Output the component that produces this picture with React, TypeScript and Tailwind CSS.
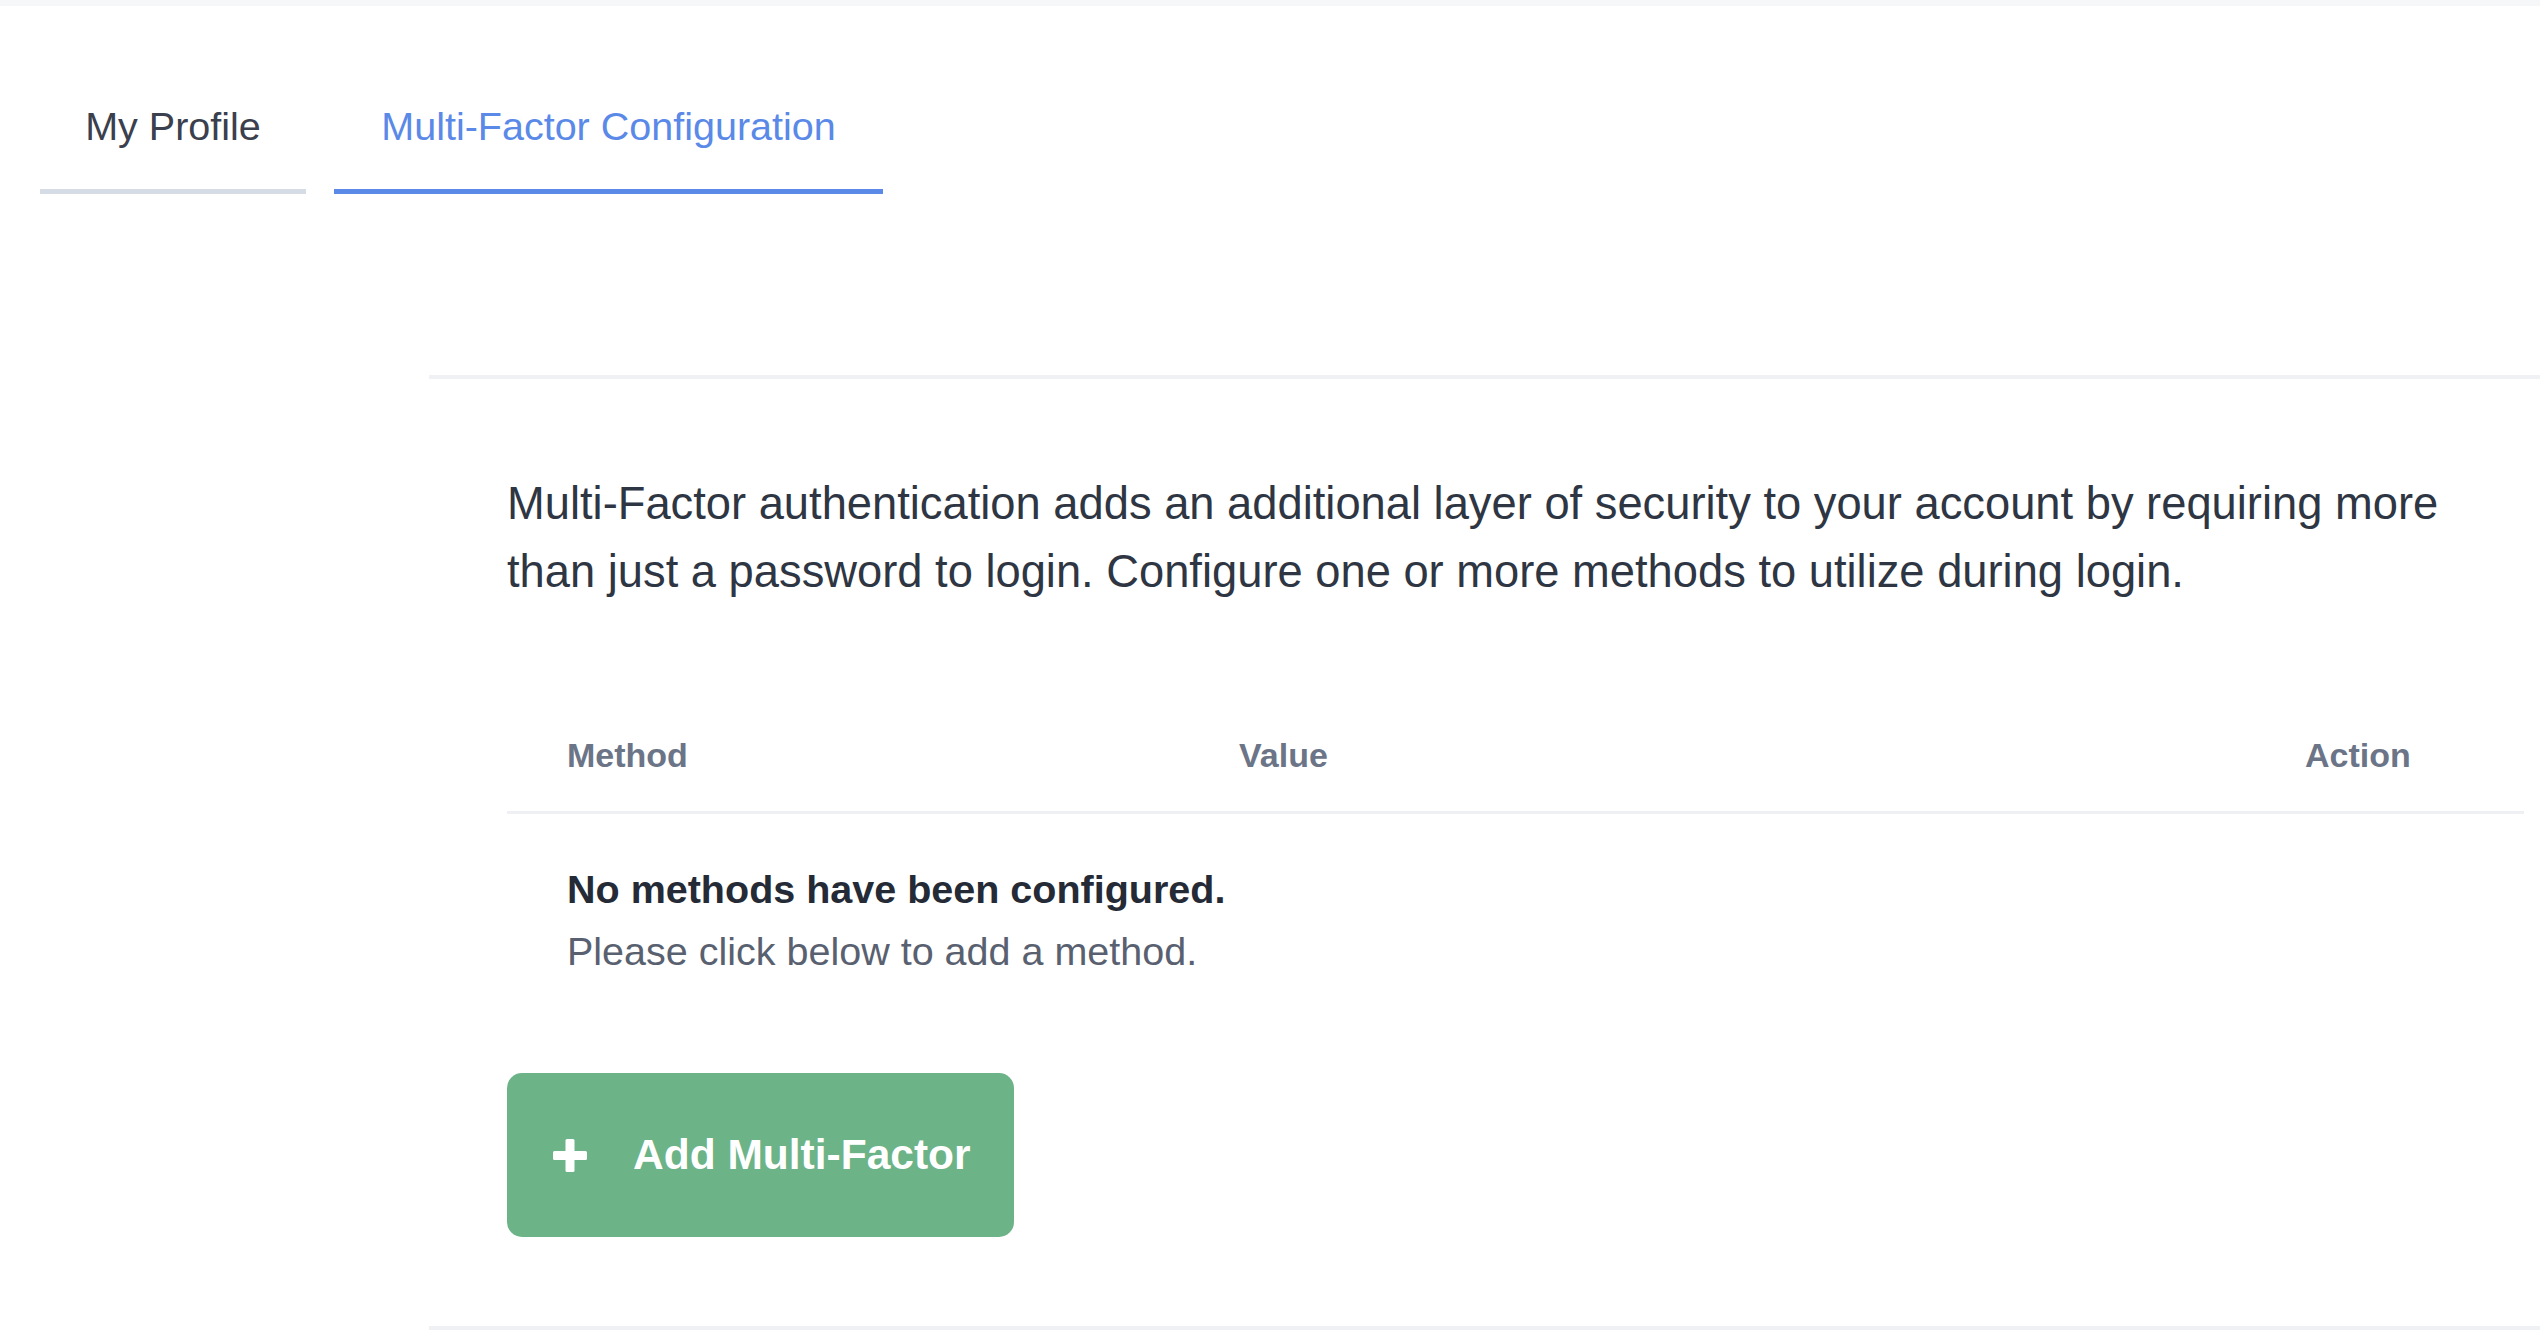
import React from "react";

export default function App() {
  const font = { fontFamily: '"Liberation Sans", Arial, Helvetica, sans-serif' };
  return (
    <div className="min-h-[1340px] w-[2540px] bg-white overflow-hidden" style={font}>
      <div className="h-[6px] bg-[#f6f7f9]" />
      {/* Tabs */}
      <div className="flex gap-[28px] pl-[40px] pt-[96px]">
        <div className="w-[266px] flex justify-center pb-[39px] border-b-[5px] border-[#d6dce5]">
          <span className="text-[39.5px] leading-[48px] text-[#3a404d]">My Profile</span>
        </div>
        <div className="w-[549px] flex justify-center pb-[39px] border-b-[5px] border-[#5a89e8]">
          <span className="text-[39.5px] leading-[48px] text-[#5a89e8]">Multi-Factor Configuration</span>
        </div>
      </div>

      {/* Main section */}
      <div className="ml-[429px] mt-[181px] border-t-[4px] border-b-[4px] border-[#f0f1f5] pl-[78px] pr-[16px] pt-[91px] pb-[89px]">
        <p className="w-[1990px] text-[45.3px] leading-[68px] text-[#2f3643]">
          Multi-Factor authentication adds an additional layer of security to your account by requiring more than just a password to login. Configure one or more methods to utilize during login.
        </p>

        <div className="mt-[85px]">
          <div className="grid grid-cols-[672px_1066px_1fr] pt-[40px] pb-[32px] border-b-[3px] border-[#eef0f4]">
            <div className="pl-[60px] text-[34px] leading-[48px] font-bold text-[#6b7587]">Method</div>
            <div className="pl-[60px] text-[34px] leading-[48px] font-bold text-[#6b7587]">Value</div>
            <div className="pl-[60px] text-[34px] leading-[48px] font-bold text-[#6b7587]">Action</div>
          </div>
          <div className="pl-[60px] pt-[44px]">
            <div className="text-[39.5px] leading-[62px] font-bold text-[#252b36]">No methods have been configured.</div>
            <div className="text-[39.5px] leading-[62px] text-[#596170]">Please click below to add a method.</div>
          </div>
        </div>

        <button className="mt-[91px] w-[507px] h-[164px] rounded-[15px] bg-[#6cb387] flex items-center pl-[46px] text-white">
          <svg width="34" height="33" viewBox="0 0 34 33" className="shrink-0">
            <rect x="12.5" y="0" width="9" height="33" rx="1.5" fill="white" />
            <rect x="0" y="12" width="34" height="9" rx="1.5" fill="white" />
          </svg>
          <span className="ml-[46px] text-[42.5px] leading-[50px] font-bold">Add Multi-Factor</span>
        </button>
      </div>
    </div>
  );
}
